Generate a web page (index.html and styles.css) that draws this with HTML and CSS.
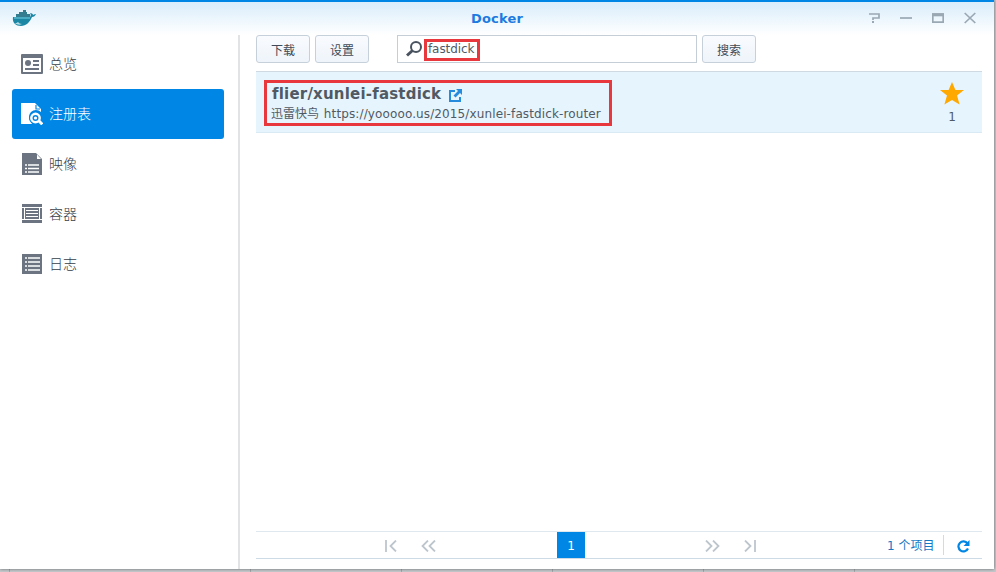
FILE: index.html
```html
<!DOCTYPE html>
<html lang="zh-CN">
<head>
<meta charset="utf-8">
<title>Docker</title>
<link rel="stylesheet" href="styles.css">
</head>
<body>
<div class="window">
  <header class="titlebar">
    <svg class="logo" width="26" height="18" viewBox="0 0 26 18"><path d="M1 8h17c1-1 1-3 0-4 2 0 3 1 3 2 1-1 3-1 3-1-1 2-2 3-4 3-2 5-6 9-11 9C4 17 0 14 1 8Z" fill="#1b87a5"/><path d="M4 5h14v4H4zM7 3h8v3H7zM11 1h3v3h-3z" fill="#347d90"/><path d="M2 9h16" stroke="#49acc3" stroke-width="2"/><path d="M3 14c2 2 5 2 7 1-2 0-3-1-4-2-1 1-2 1-3 1Z" fill="#b6dce5"/></svg>
    <h1 class="title">Docker</h1>
    <div class="controls">
      <svg width="12" height="12" viewBox="0 0 12 12"><path d="M1 2h10v4H5v2" class="ctl"/><path d="M4 9h2v2H4z" fill="#9aa8b4"/></svg>
      <svg width="12" height="12" viewBox="0 0 12 12"><path d="M0 6h12" class="ctl"/></svg>
      <svg width="12" height="12" viewBox="0 0 12 12"><path d="M.8 2h10.400v8.200H.8z" class="ctl"/><path d="M0 2.800h12" class="ctl ctl-bar"/></svg>
      <svg width="12" height="12" viewBox="0 0 12 12"><path d="M.7 1 11.300 11M11.300 1 .7 11" class="ctl"/></svg>
    </div>
  </header>
  <div class="body">
    <nav class="sidebar">
      <a class="item"><svg width="22" height="20" viewBox="0 0 22 20"><path fill="#6b7480" fill-rule="evenodd" d="M1 0h20a1 1 0 0 1 1 1v18a1 1 0 0 1-1 1H1a1 1 0 0 1-1-1V1a1 1 0 0 1 1-1Zm1 4v14h18V4Z"/><circle cx="7" cy="9" r="3" fill="#6b7480"/><path d="M12 7h6M12 11h6M4 15h14" stroke="#6b7480" stroke-width="2"/></svg><span>总览</span></a>
      <a class="item active"><svg width="22" height="22" viewBox="0 0 22 22"><path d="M0 0h14l6 6v3a7 7 0 0 0-10 10l1 2H0Z" fill="#fff"/><path d="M15 2v4h4" fill="none" stroke="#0086e5" stroke-width="1.200"/><circle cx="14.500" cy="15" r="6.500" fill="#0086e5"/><circle cx="14.500" cy="15" r="4.200" fill="none" stroke="#fff" stroke-width="2.400"/><circle cx="14.500" cy="15" r="1.600" fill="#fff"/><path d="m18 18 3.300 3.300" stroke="#fff" stroke-width="3"/></svg><span>注册表</span></a>
      <a class="item"><svg width="22" height="22" viewBox="0 0 22 22"><path d="M1 0h14l6 6v16H1Z" fill="#6b7480"/><path d="M16 1.500V6h4Z" fill="#fff"/><path d="M4 12h2m1 0h11M4 15.500h2m1 0h11M4 19h2m1 0h11" stroke="#fff" stroke-width="1.700"/></svg><span>映像</span></a>
      <a class="item"><svg width="22" height="20" viewBox="0 0 22 20"><path d="M1 0h20v3H1zM1 16h20v3H1zM1 4h2v11H1zM19 4h2v11h-2zM4 4h14v11H4z" fill="#6b7480"/><path d="M5 6.500h12M5 9.500h12M5 12.500h12" stroke="#fff"/></svg><span>容器</span></a>
      <a class="item"><svg width="22" height="20" viewBox="0 0 22 20"><path d="M1 0h20v20H1z" fill="#6b7480"/><path d="M4 4h2m1 0h12M4 8h2m1 0h12M4 12h2m1 0h12M4 16h2m1 0h12" stroke="#fff" stroke-width="1.700"/></svg><span>日志</span></a>
    </nav>
    <main class="main">
      <div class="toolbar">
        <button class="btn">下载</button>
        <button class="btn">设置</button>
        <div class="search"><svg width="18" height="18" viewBox="0 0 18 18"><circle cx="11" cy="7" r="5" fill="none" stroke="#49535f" stroke-width="2"/><path d="m7.500 10.500-5.500 5" stroke="#49535f" stroke-width="3"/></svg><span class="query">fastdick</span></div>
        <button class="btn">搜索</button>
      </div>
      <div class="result">
        <div class="mark">
          <div class="name"><span>flier/xunlei-fastdick</span><svg width="13" height="13" viewBox="0 0 13 13"><path d="M6 2H1v10h10V8" fill="none" stroke="#268bdc" stroke-width="2"/><path d="M7 0h6v6l-2-2-4.500 4.500-2-2L9 2Z" fill="#268bdc"/></svg></div>
          <div class="desc"><span class="zh">迅雷快鸟</span> <span class="url">https://yooooo.us/2015/xunlei-fastdick-router</span></div>
        </div>
        <div class="stars"><svg width="24" height="23" viewBox="0 0 24 23"><path d="m12 0 3.400 8H24l-7 5.500 2.600 9L12 18l-7.600 4.500 2.600-9L0 8h8.600Z" fill="#ffa800"/></svg><span>1</span></div>
      </div>
      <footer class="pager">
        <div class="steps">
          <svg width="12" height="12" viewBox="0 0 12 12"><path d="M1 0v12M11 .5 5.500 6l5.500 5.500" class="arrow"/></svg>
          <svg width="15" height="12" viewBox="0 0 15 12"><path d="M7 .5 1.500 6 7 11.500M14 .5 8.500 6l5.500 5.500" class="arrow"/></svg>
        </div>
        <span class="page">1</span>
        <div class="steps steps-next">
          <svg width="15" height="12" viewBox="0 0 15 12"><path d="M1 .5 6.500 6 1 11.500M8 .5 13.500 6 8 11.500" class="arrow"/></svg>
          <svg width="12" height="12" viewBox="0 0 12 12"><path d="M1 .5 6.500 6 1 11.500M11 0v12" class="arrow"/></svg>
        </div>
        <span class="count">1 个项目</span>
        <span class="refresh"><svg width="13" height="13" viewBox="0 0 13 13"><path d="M10.500 3.500A5 5 0 1 0 11 8.500" fill="none" stroke="#0086e5" stroke-width="2.200"/><path d="M12.500 0v6h-6Z" fill="#0086e5"/></svg></span>
      </footer>
    </main>
  </div>
</div>
</body>
</html>
```
FILE: styles.css
```css
* { box-sizing: border-box; }
body {
  margin: 0;
  height: 572px;
  overflow: hidden;
  background: repeating-linear-gradient(90deg, #c5c9cc 0 150px, #a3a8ac 150px 151px) 100px 0 #c5c9cc;
  color: #505a64;
  font-family: "DejaVu Sans", "Noto Sans CJK SC", sans-serif;
  font-size: 12px;
}
svg { display: block; flex: none; }
.window {
  display: flex;
  flex-direction: column;
  width: 994px;
  height: 569px;
  background: #fff;
  border-top: 2px solid #0086e5;
  box-shadow: 0 0 3px rgba(0, 0, 0, .5);
}
.titlebar {
  display: grid;
  grid-template-columns: 1fr auto 1fr;
  height: 33px;
  padding: 0 18px 0 12px;
  background: linear-gradient(#d9edfb, #fff);
}
.logo { margin-top: 7px; }
.title {
  margin: 0;
  padding-left: 6px;
  color: #1c7be0;
  font-size: 13px;
  letter-spacing: .2px;
  line-height: 33px;
}
.controls {
  display: flex;
  justify-content: flex-end;
  gap: 20px;
  padding-top: 10px;
}
.ctl { fill: none; stroke: #9aa8b4; stroke-width: 1.7; }
.ctl-bar { stroke-width: 3; }
.body { display: flex; flex: 1; min-height: 0; }
.sidebar {
  width: 240px;
  padding: 4px 14px 0 12px;
  border-right: 2px solid #e2e3e5;
}
.item {
  display: flex;
  align-items: center;
  gap: 6px;
  height: 50px;
  padding-left: 9px;
  border-radius: 3px;
  color: #353e48;
  font: 300 14px "Noto Sans CJK SC", sans-serif;
}
.item span { padding-bottom: 2px; }
.item.active { background: #0086e5; color: #fff; }
.main {
  display: flex;
  flex: 1;
  flex-direction: column;
  padding: 0 12px 10px 16px;
}
.toolbar { display: flex; height: 28px; }
.btn {
  width: 54px;
  height: 28px;
  margin-right: 5px;
  padding: 0;
  border: 1px solid #c6d0da;
  border-radius: 3px;
  background: linear-gradient(#f9fbfe, #eef4fa);
  color: #414b57;
  font: 12px "Noto Sans CJK SC", sans-serif;
}
.search {
  display: flex;
  align-items: center;
  width: 300px;
  margin: 0 5px 0 23px;
  padding-left: 7px;
  border: 1px solid #c5cdd7;
}
.query {
  width: 56px;
  height: 22px;
  margin: 2px 0 0 1px;
  padding-left: 1px;
  border: 3px solid #e8383d;
  letter-spacing: -.1px;
  line-height: 15px;
}
.result {
  display: flex;
  justify-content: space-between;
  height: 62px;
  margin-top: 8px;
  padding: 8px 18px 0 8px;
  border-top: 1px solid #ced9e2;
  border-bottom: 1px solid #d9eaf5;
  background: #e6f4fd;
}
.mark {
  width: 348px;
  height: 46px;
  padding: 2px 0 0 5px;
  border: 3px solid #e8383d;
}
.name {
  display: flex;
  align-items: center;
  gap: 8px;
  height: 18px;
  font-size: 15px;
  font-weight: bold;
  letter-spacing: .2px;
}
.name svg { margin-top: 3px; }
.desc { height: 20px; margin-left: -1px; line-height: 19px; white-space: nowrap; }
.zh { font-family: "Noto Sans CJK SC", sans-serif; }
.url { margin-left: 1px; letter-spacing: .12px; }
.stars {
  display: flex;
  flex-direction: column;
  align-items: center;
  width: 24px;
  padding-top: 2px;
}
.stars span { margin-top: 4px; line-height: 16px; }
.pager {
  display: grid;
  grid-template-columns: 301px 28px 302px 56px 39px;
  align-items: center;
  height: 28px;
  margin-top: auto;
  border-top: 1px solid #dfe8ef;
  border-bottom: 1px solid #cddbe7;
}
.steps { display: flex; gap: 24px; padding: 2px 0 0 129px; }
.steps-next { padding-left: 120px; }
.arrow { fill: none; stroke: #bdc5cd; stroke-width: 1.8; }
.page {
  height: 26px;
  background: #0086e5;
  color: #fff;
  line-height: 29px;
  text-align: center;
}
.count { padding-top: 1px; color: #1478c5; line-height: 20px; white-space: nowrap; }
.refresh {
  display: flex;
  align-items: center;
  height: 20px;
  padding: 2px 0 0 13px;
  border-left: 1px solid #d2dae2;
}
```
